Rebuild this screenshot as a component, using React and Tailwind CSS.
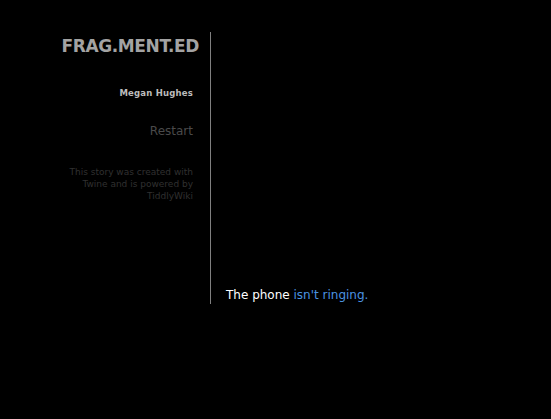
export default function App() {
  return (
    <div className="min-h-[419px] w-full bg-black font-['DejaVu_Sans',Verdana,sans-serif]">
      <div className="flex pt-[32px] pl-[40px]">
        {/* sidebar */}
        <div className="w-[171px] h-[272px] border-r border-[#808080] pr-[17px] text-right">
          <h1 className="mt-[3px] mr-[-6px] text-[17px] leading-[22px] font-bold text-[#a3a3a3] tracking-[-0.4px]">
            FRAG.MENT.ED
          </h1>
          <p className="mt-[30px] text-[8.5px] leading-[12px] font-bold text-[#bcbcbc] tracking-[0.2px]">
            Megan Hughes
          </p>
          <p className="mt-[24px] text-[12px] leading-[16px] text-[#4a4a4a]">Restart</p>
          <p className="mt-[27px] text-[9px] leading-[12px] text-[#303030]">
            This story was created with
            <br />
            Twine and is powered by
            <br />
            TiddlyWiki
          </p>
        </div>
        {/* passage */}
        <div className="flex items-end pl-[15px] h-[272px]">
          <p className="text-[12px] leading-[16px] text-white mb-[1px]">
            The phone <span className="text-[#4b93e0]">isn't ringing.</span>
          </p>
        </div>
      </div>
    </div>
  );
}
